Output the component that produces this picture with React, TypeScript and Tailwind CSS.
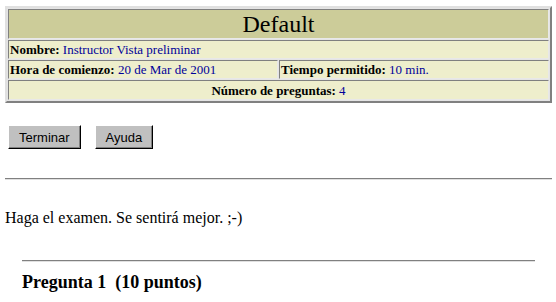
import React from 'react';

const serif = { fontFamily: '"Liberation Serif", "Times New Roman", serif' };

function Label({ name, value }: { name: string; value: string }) {
  return (
    <>
      <b>{name}</b> <span className="text-[#000099]">{value}</span>
    </>
  );
}

const cell =
  'border border-t-[#808080] border-l-[#808080] border-b-[#e8e8e8] border-r-[#e8e8e8] bg-[#eeeecc] px-[1px] h-[19px] leading-[15px] text-[13px] text-black';

export default function App() {
  return (
    <div className="w-[556px] h-[302px] bg-white overflow-hidden font-['Liberation_Serif',serif] text-black">
      <table className="ml-[5px] mt-[6px] w-[547px] border-separate border-spacing-[1px] border-2 border-t-[#e0e0e0] border-l-[#e0e0e0] border-b-[#808080] border-r-[#808080] bg-[#e4e4e4]">
        <tbody>
          <tr>
            <td
              colSpan={2}
              className="border border-t-[#808080] border-l-[#808080] border-b-[#e8e8e8] border-r-[#e8e8e8] bg-[#cccc99] h-[30px] text-center text-[24px] leading-[28px]"
            >
              Default
            </td>
          </tr>
          <tr>
            <td colSpan={2} className={cell}>
              <Label name="Nombre:" value="Instructor Vista preliminar" />
            </td>
          </tr>
          <tr>
            <td className={cell + ' w-1/2'}>
              <Label name="Hora de comienzo:" value="20 de Mar de 2001" />
            </td>
            <td className={cell}>
              <Label name="Tiempo permitido:" value="10 min." />
            </td>
          </tr>
          <tr>
            <td colSpan={2} className={cell + ' text-center h-[20px]'}>
              <Label name="Número de preguntas:" value="4" />
            </td>
          </tr>
        </tbody>
      </table>

      <div className="flex gap-[14px] ml-[8px] mt-[22px]">
        {['Terminar', 'Ayuda'].map((t) => (
          <button
            key={t}
            className="h-[24px] px-[10px] bg-[#c0c0c0] border border-t-white border-l-white border-b-black border-r-black shadow-[inset_-1px_-1px_0_#808080] font-['Liberation_Sans',Arial,sans-serif] text-[13px] leading-none text-black"
          >
            {t}
          </button>
        ))}
      </div>

      <div className="ml-[5px] mr-[4px] mt-[29px] h-[2px] border-t border-t-[#808080] border-b border-b-[#e0e0e0]" />

      <p className="ml-[5px] mt-[29px] text-[16px] leading-[18px]" style={serif}>
        Haga el examen. Se sentirá mejor. ;-)
      </p>

      <div className="ml-[22px] mr-[21px] mt-[33px] h-[2px] border-t border-t-[#808080] border-b border-b-[#e0e0e0]" />

      <h3 className="ml-[22px] mt-[10px] text-[18px] font-bold leading-[20px] whitespace-pre">
        Pregunta 1  (10 puntos)
      </h3>
    </div>
  );
}
